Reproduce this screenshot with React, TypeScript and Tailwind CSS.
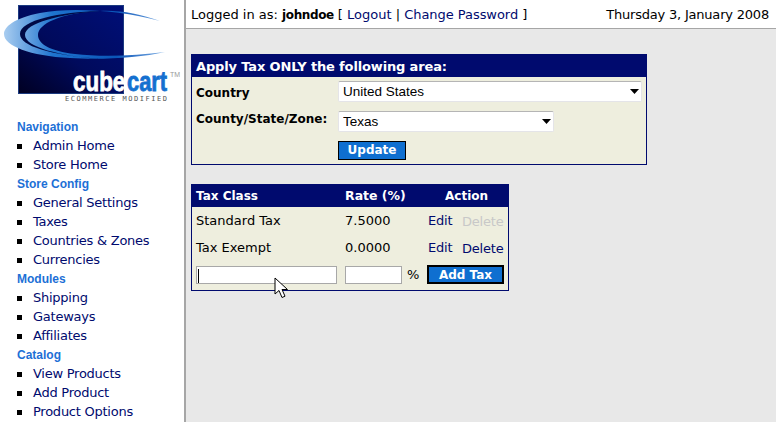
const NAV: { title: string; items: string[] }[] = [
  { title: "Navigation", items: ["Admin Home", "Store Home"] },
  { title: "Store Config", items: ["General Settings", "Taxes", "Countries & Zones", "Currencies"] },
  { title: "Modules", items: ["Shipping", "Gateways", "Affiliates"] },
  { title: "Catalog", items: ["View Products", "Add Product", "Product Options"] },
];

function Logo() {
  return (
    <svg width="184" height="106" viewBox="0 0 184 106" className="block">
      <defs>
        <linearGradient id="sq" x1="0" y1="1" x2="1" y2="0">
          <stop offset="0" stopColor="#000022" />
          <stop offset="0.45" stopColor="#000a5c" />
          <stop offset="1" stopColor="#000f78" />
        </linearGradient>
        <linearGradient id="swoosh" x1="0" y1="0" x2="1" y2="0">
          <stop offset="0" stopColor="#a9cdf0" />
          <stop offset="0.3" stopColor="#1f74cf" />
          <stop offset="0.7" stopColor="#0a55b8" />
          <stop offset="1" stopColor="#7fb0e6" />
        </linearGradient>
      </defs>
      <rect x="18.5" y="5.5" width="105" height="88" fill="url(#sq)" stroke="#1b3a80" />
      <path d="M160 21 C120 10 70 7 40 13 C14 18 4 27 4 34 C4 46 30 56 70 58 C100 60 140 58 165 52 C135 56 100 57 75 54 C50 51 38 44 38 35 C38 24 60 13 100 11 C120 10 140 14 160 21 Z" fill="url(#swoosh)" />
      <path d="M100 11 C60 12 20 20 20 34 C20 46 50 55 100 59 C60 56 25 47 25 35 C25 23 60 14 100 11 Z" fill="#000a45" />
      <text transform="translate(73 91) scale(0.8 1)" fontFamily="'Liberation Sans', sans-serif" fontWeight="700" fontSize="28" fill="#ffffff" stroke="#ffffff" strokeWidth="0.8">cube</text>
      <text transform="translate(127 91) scale(0.78 1)" fontFamily="'Liberation Sans', sans-serif" fontWeight="700" fontSize="28" fill="#1470d0" stroke="#1470d0" strokeWidth="0.8">cart</text>
      <text x="170" y="77" fontFamily="'Liberation Sans', sans-serif" fontSize="7" fill="#999999">TM</text>
      <text x="65" y="101" fontFamily="'DejaVu Sans Mono', monospace" fontSize="7" textLength="102" lengthAdjust="spacing" fill="#555555">ECOMMERCE MODIFIED</text>
    </svg>
  );
}

function Sidebar() {
  return (
    <aside className="w-[186px] shrink-0 border-r-2 border-[#a6a6a6] bg-white h-[422px] overflow-hidden">
      <div className="h-[118px]">
        <Logo />
      </div>
      <nav className="pl-[17px]">
        {NAV.map((s) => (
          <div key={s.title}>
            <div className="h-[19px] leading-[19px] text-[12px] font-bold text-[#1d70d6] font-['Liberation_Sans',sans-serif]">{s.title}</div>
            {s.items.map((i) => (
              <div key={i} className="flex h-[19px] items-center text-[13px] tracking-[-0.25px] text-[#000a6e] font-['DejaVu_Sans',sans-serif]">
                <span className="mr-[11px] h-[5px] w-[5px] bg-black" />
                <span className="mb-[2px]">{i}</span>
              </div>
            ))}
          </div>
        ))}
      </nav>
    </aside>
  );
}

function Arrow() {
  return (
    <svg width="9" height="5" viewBox="0 0 9 5" className="absolute right-[2px] top-[7px]">
      <path d="M0 0h9L4.5 5z" fill="#000" />
    </svg>
  );
}

function Select({ value, width }: { value: string; width: string }) {
  return (
    <div className={`relative ${width} h-[21px] rounded-[2px] border border-t-[#b5b5b5] border-x-[#e4e4e8] border-b-[#e4e4e8] bg-white`}>
      <select className="h-full w-full appearance-none bg-transparent pl-[4px] text-[13.5px] leading-[19px] text-black outline-none font-['Liberation_Sans',sans-serif]" defaultValue={value}>
        <option>{value}</option>
      </select>
      <Arrow />
    </div>
  );
}

export default function App() {
  return (
    <div className="flex h-[422px] w-[776px] overflow-hidden bg-[#e8e8e8] text-[13px] text-black font-['DejaVu_Sans',sans-serif]">
      <Sidebar />
      <main className="flex-1 relative">
        <div className="flex h-[29px] items-center justify-between border-b border-[#a6a6a6] bg-white pl-[5px] pr-[7px] pt-[2px]">
          <div>
            Logged in as: <b className="text-[12px] tracking-[-0.4px]">johndoe</b> [ <span className="text-[#000a6e]">Logout</span> | <span className="text-[#000a6e] tracking-[-0.05px]">Change Password</span> ]
          </div>
          <div className="tracking-[-0.2px]">Thursday 3, January 2008</div>
        </div>

        <section className="ml-[5px] mt-[25px] w-[456px] border border-[#000a6e] bg-[#eeeede]">
          <div className="h-[23px] -mt-px bg-[#000a6e] pl-[4px] text-[13px] font-bold leading-[25px] tracking-[-0.15px] text-white">Apply Tax ONLY the following area:</div>
          <div className="flex items-center pl-[4px] pt-[4px]">
            <div className="w-[142px] text-[12px] font-bold pt-[2px]">Country</div>
            <Select value="United States" width="w-[304px]" />
          </div>
          <div className="flex items-start pl-[4px] pt-[9px]">
            <div className="-mt-px w-[142px] text-[12px] font-bold">County/State/Zone:</div>
            <Select value="Texas" width="w-[216px]" />
          </div>
          <div className="pl-[146px] pt-[9px] pb-[4px]">
            <button className="block h-[19px] w-[68px] border border-black bg-[#0f6fd0] text-[12px] font-bold leading-[17px] text-white">Update</button>
          </div>
        </section>

        <section className="relative ml-[5px] mt-[19px] w-[318px] border border-[#000a6e] bg-[#eeeede]">
          <div className="flex h-[23px] -mt-px items-center bg-[#000a6e] pl-[4px] pt-[1px] text-[12px] font-bold text-white">
            <div className="w-[149px]">Tax Class</div>
            <div className="w-[100px] text-[12.5px]">Rate (%)</div>
            <div>Action</div>
          </div>
          <div className="flex h-[27px] items-center pl-[4px]">
            <div className="w-[149px]">Standard Tax</div>
            <div className="w-[83px]">7.5000</div>
            <div className="w-[34px] tracking-[-0.2px] text-[#000a6e]">Edit</div>
            <div className="pt-[2px] tracking-[-0.2px] text-[#c8c8c8]">Delete</div>
          </div>
          <div className="flex h-[27px] items-center pl-[4px]">
            <div className="w-[149px]">Tax Exempt</div>
            <div className="w-[83px]">0.0000</div>
            <div className="w-[34px] tracking-[-0.2px] text-[#000a6e]">Edit</div>
            <div className="pt-[2px] tracking-[-0.2px] text-[#000a6e]">Delete</div>
          </div>
          <div className="flex items-center pl-[4px] pb-[5px] pt-[4px]">
            <input defaultValue="" className="h-[18px] w-[141px] border border-[#a8a8a8] bg-white" />
            <input defaultValue="" className="ml-[8px] h-[18px] w-[57px] border border-[#a8a8a8] bg-white" />
            <span className="ml-[5px] w-[20px]">%</span>
            <button className="h-[19px] w-[77px] border-2 border-black bg-[#0f6fd0] pt-[1px] text-[12px] font-bold leading-[14px] text-white">Add Tax</button>
          </div>
          <span className="absolute left-[6px] top-[84px] h-[14px] w-px bg-black" />
          {/* mouse pointer */}
          <svg width="14" height="22" viewBox="0 0 14 22" className="absolute left-[82px] top-[92px]">
            <path d="M1 1v16l4-3.5 3 7 3-1.3-3-6.7h5.5z" fill="#fff" stroke="#000" strokeWidth="1" />
          </svg>
        </section>
      </main>
    </div>
  );
}
